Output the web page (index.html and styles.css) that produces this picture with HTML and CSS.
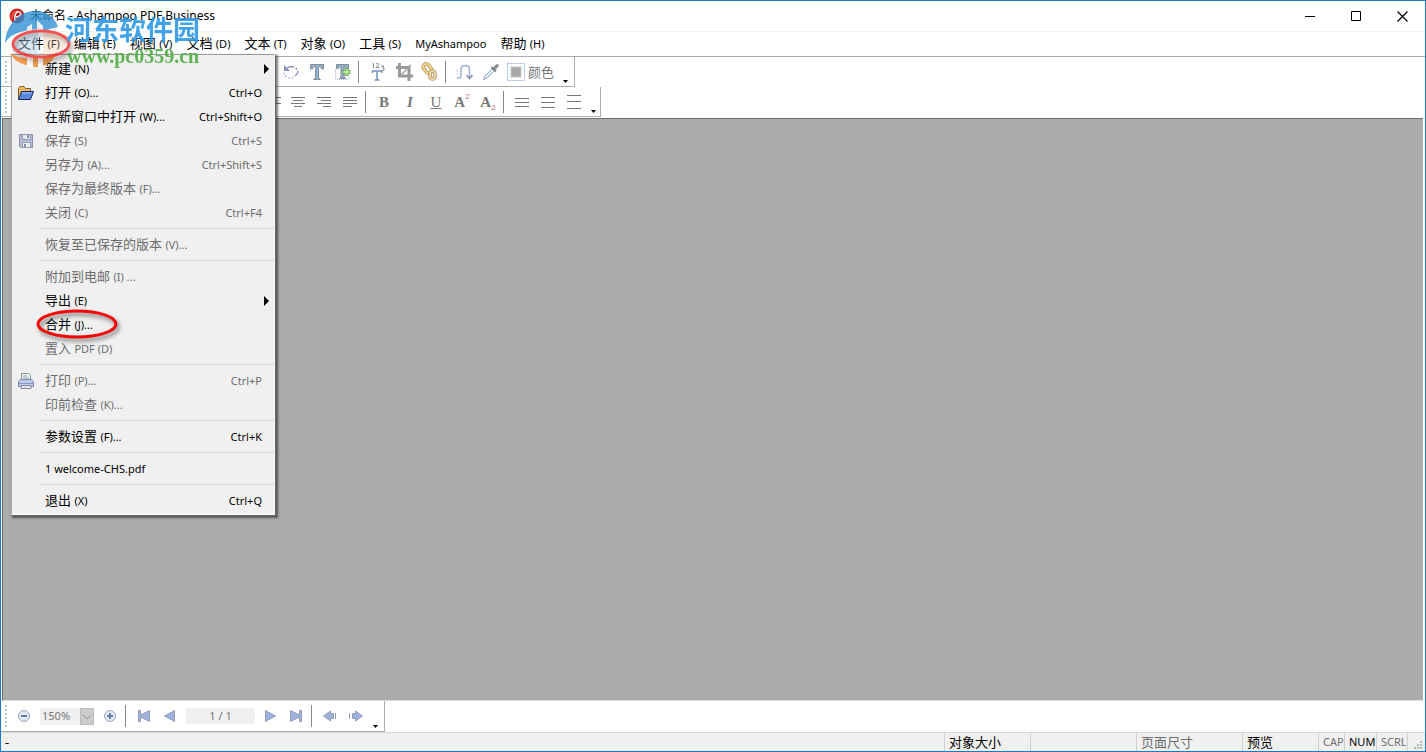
FILE: index.html
```html
<!DOCTYPE html>
<html lang="zh-CN">
<head>
<meta charset="utf-8">
<title>未命名 - Ashampoo PDF Business</title>
<link rel="stylesheet" href="styles.css">
</head>
<body>
<div class="window">
  <header class="titlebar">
    <svg class="app-icon" width="16" height="16" viewBox="0 0 16 16"><circle cx="8" cy="8" r="7.5" fill="#c81414"/><path d="M1 9Q3 2 10 1Q5 4 3 13Z" fill="#ed4b35"/><path d="M6 13Q5 7 8 4Q11 3 12 6Q11 9 7 9" fill="none" stroke="#fff" stroke-width="1.5"/></svg>
    <h1 class="title">未命名 - Ashampoo PDF Business</h1>
    <div class="window-buttons">
      <button aria-label="最小化"><svg width="10" height="11"><path d="M0 5.500H10" stroke="#000"/></svg></button>
      <button aria-label="最大化"><svg width="10" height="11"><path d="M.5 .5H9.500V9.500H.5Z" fill="none" stroke="#000"/></svg></button>
      <button aria-label="关闭"><svg width="11" height="11"><path d="M.5 .5L10.500 10.500M10.500 .5L.5 10.500" stroke="#000" stroke-width="1.200"/></svg></button>
    </div>
  </header>

  <nav class="menubar">
    <button class="entry">文件 <small>(F)</small></button>
    <button class="entry">编辑 <small>(E)</small></button>
    <button class="entry">视图 <small>(V)</small></button>
    <button class="entry">文档 <small>(D)</small></button>
    <button class="entry">文本 <small>(T)</small></button>
    <button class="entry">对象 <small>(O)</small></button>
    <button class="entry">工具 <small>(S)</small></button>
    <button class="entry"><small>MyAshampoo</small></button>
    <button class="entry">帮助 <small>(H)</small></button>

    <div class="menu">
      <button class="item"><span>新建 <small>(N)</small></span><svg class="arrow" width="6" height="10"><path d="M0 0L5 5L0 10Z"/></svg></button>
      <button class="item"><svg class="item-icon" width="16" height="16" viewBox="0 0 16 16"><path d="M.5 14V3.500L2 1.500H6L7.500 3.500H12.500V7" fill="#f0b95c" stroke="#7d5b2a"/><path d="M3.500 6.500H15.500L12.500 14.500H.5Z" fill="#5b86dc" stroke="#122a64"/><path d="M4 8H14" stroke="#a5c4ff"/></svg><span>打开 <small>(O)...</small></span><kbd>Ctrl+O</kbd></button>
      <button class="item"><span>在新窗口中打开 <small>(W)...</small></span><kbd>Ctrl+Shift+O</kbd></button>
      <button class="item" disabled><svg class="item-icon" width="16" height="16" viewBox="0 0 16 16"><path d="M1.500 1.500H14.500V14.500H2.500L1.500 13.500Z" fill="#b5bcd6" stroke="#8b90a4"/><path d="M4.500 1.500H12.500V6.500H4.500Z" fill="#e4e8ec" stroke="#959bb0"/><path d="M4.500 9.500H12.500V14.500H4.500Z" fill="#eef0ef" stroke="#959bb0"/><path d="M6 11H8V14H6ZM9 2H11V5H9Z" fill="#8c93ac"/></svg><span>保存 <small>(S)</small></span><kbd>Ctrl+S</kbd></button>
      <button class="item" disabled><span>另存为 <small>(A)...</small></span><kbd>Ctrl+Shift+S</kbd></button>
      <button class="item" disabled><span>保存为最终版本 <small>(F)...</small></span></button>
      <button class="item" disabled><span>关闭 <small>(C)</small></span><kbd>Ctrl+F4</kbd></button>
      <hr>
      <button class="item" disabled><span>恢复至已保存的版本 <small>(V)...</small></span></button>
      <hr>
      <button class="item" disabled><span>附加到电邮 <small>(I) ...</small></span></button>
      <button class="item"><span>导出 <small>(E)</small></span><svg class="arrow" width="6" height="10"><path d="M0 0L5 5L0 10Z"/></svg></button>
      <button class="item"><span>合并 <small>(J)...</small></span></button>
      <button class="item" disabled><span>置入 <small>PDF (D)</small></span></button>
      <hr>
      <button class="item" disabled><svg class="item-icon" width="16" height="16" viewBox="0 0 16 16"><path d="M3.500 7V.5H10.500L12.500 2.500V7" fill="#eef4f4" stroke="#84949a"/><path d="M5 3H9M5 5H11" stroke="#8fa0a6"/><path d="M.5 8.500L2.500 6.500H13.500L15.500 8.500V13.500H.5Z" fill="#bccbe6" stroke="#7e8ba8"/><path d="M1 10.500H15" stroke="#8799c5"/><path d="M3 12.500H13V15.500H3Z" fill="#e2e8ee" stroke="#818b9b"/></svg><span>打印 <small>(P)...</small></span><kbd>Ctrl+P</kbd></button>
      <button class="item" disabled><span>印前检查 <small>(K)...</small></span></button>
      <hr>
      <button class="item"><span>参数设置 <small>(F)...</small></span><kbd>Ctrl+K</kbd></button>
      <hr>
      <button class="item"><small>1 welcome-CHS.pdf</small></button>
      <hr>
      <button class="item"><span>退出 <small>(X)</small></span><kbd>Ctrl+Q</kbd></button>
      <svg class="merge-ring" width="90" height="38"><ellipse cx="41" cy="15" rx="39" ry="13"/></svg>
    </div>
  </nav>

  <div class="toolbar toolbar-main">
    <button aria-label="旋转"><svg width="18" height="18" viewBox="0 0 18 18"><path d="M4 6Q9 1.500 13.500 5T14 12" fill="none" stroke="#8d94ba" stroke-width="1.500" stroke-dasharray="9 1.500 2 1.500"/><path d="M2 2V8H8Z" fill="#8d94ba"/><path d="M14 12Q10 17 5 14T3 9" fill="none" stroke="#9aa9d4" stroke-width="1.500" stroke-dasharray="1.500 2"/></svg></button>
    <button aria-label="文本工具"><svg width="18" height="18" viewBox="0 0 18 18"><path d="M2.500 1.500H15.500V6H13.500L12.500 3.500H10.500V14.500L12.500 16.500H5.500L7.500 14.500V3.500H5.500L4.500 6H2.500Z" fill="#8fb2d3" stroke="#858d98"/></svg></button>
    <button aria-label="添加文本"><svg width="18" height="18" viewBox="0 0 18 18"><path d="M1.500 6V16.500H15V8" fill="none" stroke="#9fb7e6" stroke-dasharray="1 1"/><path d="M2.500 1.500H14.500V5.500H12L11 3.500H10V14L12 15.500H5.500L7 14V3.500H5.500L4.500 5.500H2.500Z" fill="#8fb2d3" stroke="#858d98"/><path d="M12.500 5V13M8.500 9H16.500" stroke="#78a96a" stroke-width="4"/><path d="M12.500 6V12M9.500 9H15.500" stroke="#b6ee94" stroke-width="2"/></svg></button>
    <i class="divider"></i>
    <button aria-label="页码"><svg width="18" height="20" viewBox="0 0 18 20"><path d="M3.500 2L4.500 1.500V6M7 2Q9 .5 10 2.500L7 5.500H10.500M12 4H15L13.500 6Q16 6 15 8Q14 9.500 12 8" fill="none" stroke="#888"/><path d="M3.500 11V9H12.500V11M8 9V18M5.500 18H10.500" fill="none" stroke="#7592bd" stroke-width="1.500"/></svg></button>
    <button aria-label="裁剪"><svg width="18" height="18" viewBox="0 0 18 18"><path d="M4.500 0V13H18M1 4.500H14V18" fill="none" stroke="#9a9a9a" stroke-width="3"/><path d="M6 12L16 2" stroke="#a2a2a2" stroke-width="1.500"/></svg></button>
    <button aria-label="链接"><svg width="18" height="20" viewBox="0 0 18 20"><rect x="3.500" y="1.500" width="6" height="10" rx="3" transform="rotate(-35 6.500 6.500)" fill="none" stroke="#b09050" stroke-width="3.500"/><rect x="3.500" y="1.500" width="6" height="10" rx="3" transform="rotate(-35 6.500 6.500)" fill="none" stroke="#f0d38b" stroke-width="2"/><rect x="9" y="9" width="5" height="8" rx="2.500" fill="none" stroke="#b09265" stroke-width="3.500"/><rect x="9" y="9" width="5" height="8" rx="2.500" fill="none" stroke="#ecd3a0" stroke-width="2"/></svg></button>
    <i class="divider"></i>
    <button aria-label="连接文本"><svg width="18" height="18" viewBox="0 0 18 18"><path d="M1 15H3.500Q5 15 5 13V6Q5 2.500 9.500 2.500Q13.500 2.500 13.500 6V15" fill="none" stroke="#9fb2d6" stroke-width="1.500"/><path d="M10.500 12L13.500 15.500L16.500 12" fill="none" stroke="#8793a9" stroke-width="1.500"/><path d="M1 6V12" stroke="#b5c2e0" stroke-dasharray="1 1"/></svg></button>
    <button aria-label="吸管"><svg width="18" height="18" viewBox="0 0 18 18"><path d="M10.500 5.500L3 13L1.500 16.500L5 15L12.500 7.500Z" fill="#e5f2ff" stroke="#8fa3cb"/><path d="M9.500 4L14 8.500M11 7L15 3" stroke="#777" stroke-width="2"/><path d="M12 3L15 1Q18 1 16 4L14 6Z" fill="#8f9092"/></svg></button>
    <button class="color"><svg width="18" height="18" viewBox="0 0 18 18"><rect x=".5" y=".5" width="17" height="17" fill="#fff" stroke="#9eb6ed" stroke-dasharray="2 1"/><rect x="4" y="4" width="10" height="10" fill="#aaa" stroke="#c7c7c7"/></svg>颜色</button>
    <button class="more" aria-label="更多"><svg width="5" height="3"><path d="M0 0H5L2.500 3Z"/></svg></button>
  </div>

  <div class="toolbar toolbar-format">
    <button class="cut" aria-label="左对齐"><svg width="16" height="12"><path d="M0 1.500H14M0 4.500H10M0 7.500H14M0 10.500H8"/></svg></button>
    <button aria-label="居中"><svg width="16" height="12"><path d="M1 1.500H15M3 4.500H13M1 7.500H15M4 10.500H12"/></svg></button>
    <button aria-label="右对齐"><svg width="16" height="12"><path d="M1 1.500H15M5 4.500H15M1 7.500H15M7 10.500H15"/></svg></button>
    <button aria-label="两端对齐"><svg width="16" height="12"><path d="M1 1.500H15M1 4.500H15M1 7.500H15M1 10.500H10"/></svg></button>
    <i class="divider"></i>
    <button class="glyph"><b>B</b></button>
    <button class="glyph"><b><em>I</em></b></button>
    <button class="glyph light"><u>U</u></button>
    <button class="glyph">A<sup>2</sup></button>
    <button class="glyph">A<sub>2</sub></button>
    <i class="divider"></i>
    <button aria-label="单倍行距"><svg width="16" height="14"><path d="M1 3.500H15M1 7.500H15M1 11.500H15"/></svg></button>
    <button aria-label="1.5 倍行距"><svg width="16" height="14"><path d="M1 2.500H15M1 7.500H15M1 12.500H15"/></svg></button>
    <button aria-label="双倍行距"><svg width="16" height="14"><path d="M1 .5H15M1 6.500H15M1 13.500H15"/></svg></button>
    <button class="more" aria-label="更多"><svg width="5" height="3"><path d="M0 0H5L2.500 3Z"/></svg></button>
  </div>

  <main class="canvas"></main>

  <div class="toolbar toolbar-nav">
    <button aria-label="缩小"><svg width="14" height="14" viewBox="0 0 14 14"><circle cx="7" cy="7" r="5.500" fill="#e1eafb" stroke="#9ba6be"/><path d="M4 7H10" stroke="#6d7fa9" stroke-width="2"/></svg></button>
    <div class="zoom"><select aria-label="缩放"><option>150%</option></select><svg width="14" height="17"><path d="M.5 .5H13.500V16.500H.5Z" fill="#ccc" stroke="#bbb"/><path d="M3 7L7 11L11 7" fill="none" stroke="#999"/></svg></div>
    <button aria-label="放大"><svg width="14" height="14" viewBox="0 0 14 14"><circle cx="7" cy="7" r="5.500" fill="#e1eafb" stroke="#9ba6be"/><path d="M4 7H10M7 4V10" stroke="#6d7fa9" stroke-width="2"/></svg></button>
    <i class="divider"></i>
    <button class="spaced" aria-label="首页"><svg class="nav-icon" width="14" height="12"><path d="M1.500 .5H3.500V5L12.500 .5V11.500L3.500 7V11.500H1.500Z"/></svg></button>
    <button aria-label="上一页"><svg class="nav-icon" width="14" height="12"><path d="M1.500 6L11.500 .5V11.500Z"/></svg></button>
    <input class="page" aria-label="页码" value="1 / 1">
    <button aria-label="下一页"><svg class="nav-icon" width="14" height="12"><path d="M12.500 6L2.500 .5V11.500Z"/></svg></button>
    <button aria-label="末页"><svg class="nav-icon" width="14" height="12"><path d="M12.500 .5H10.500V5L1.500 .5V11.500L10.500 7V11.500H12.500Z"/></svg></button>
    <i class="divider"></i>
    <button class="spaced" aria-label="后退"><svg class="nav-icon" width="16" height="12"><path d="M1.500 6L8.500 1V3.500H11.500V8.500H8.500V11Z"/><path d="M13.500 3V9"/></svg></button>
    <button aria-label="前进"><svg class="nav-icon" width="16" height="12"><path d="M14.500 6L7.500 1V3.500H4.500V8.500H7.500V11Z"/><path d="M1.500 3V9"/></svg></button>
    <button class="more" aria-label="更多"><svg width="5" height="3"><path d="M0 0H5L2.500 3Z"/></svg></button>
  </div>

  <footer class="status">
    <span class="message">-</span>
    <span class="cell size">对象大小</span>
    <span class="cell wide"></span>
    <span class="cell wide off">页面尺寸</span>
    <span class="cell preview">预览</span>
    <span class="cell key off">CAP</span>
    <span class="cell key num">NUM</span>
    <span class="cell key scroll off">SCRL</span>
    <span class="cell corner"><svg width="9" height="9"><path d="M6 0H8V2H6ZM3 3H5V5H3ZM6 3H8V5H6ZM0 6H2V8H0ZM3 6H5V8H3ZM6 6H8V8H6Z" fill="#b8b8b8"/></svg></span>
  </footer>

  <div class="watermark">
    <svg class="watermark-logo" width="76" height="64" viewBox="0 0 76 64">
      <defs><filter id="soft" x="-20%" y="-30%" width="150%" height="180%"><feDropShadow dx="2" dy="3" stdDeviation="2" flood-color="#000" flood-opacity=".5"/></filter></defs>
      <path d="M5 33C6 14 20 1 35 1C46 1 55 7 58 17L46 20Q36 18 24 21Q10 24 5 33Z" fill="#2d8fd4" opacity=".88"/>
      <path d="M10 43Q18 48 27 48V55C19 54 13 49 10 43ZM33 48H38V57H33ZM43 48Q52 47 57 42C54 50 49 54 43 56Z" fill="#f38b2d" opacity=".9"/>
      <path d="M13 33Q16 22 38 21V45Q15 45 13 33Z" fill="#a9cfe8" opacity=".5"/>
      <path d="M43 21Q66 23 67 33Q64 43 43 45Z" fill="#f3bd98" opacity=".35"/>
      <path d="M37 10L43 16V21H37ZM27 46H33V57H27ZM38 46H43V57H38ZM27 17L32 14V21H27Z" fill="#fff" opacity=".85"/>
      <ellipse cx="41" cy="34" rx="28" ry="13" fill="none" stroke="#ef2424" stroke-width="3" opacity=".85" filter="url(#soft)"/>
    </svg>
    <div class="watermark-text"><strong>河东软件园</strong><span>www.pc0359.cn</span></div>
  </div>
</div>
</body>
</html>
```
FILE: styles.css
```css
* { box-sizing: border-box; }
body { margin: 0; }
button, input, select { font: inherit; color: inherit; border: 0; background: none; padding: 0; margin: 0; border-radius: 0; }
.window {
  position: relative;
  display: flex;
  flex-direction: column;
  height: 100vh;
  overflow: hidden;
  border: 1px solid #1979ca;
  background: #fff;
  color: #000;
  font: 13px/16px "Noto Sans", "Noto Sans CJK SC", sans-serif;
}
small, kbd { font: 11px/16px "Noto Sans", "Noto Sans CJK SC", sans-serif; }
svg { display: block; flex: none; }

.titlebar { display: flex; align-items: center; height: 30px; padding-left: 8px; flex: none; }
.title { margin: 0 0 0 5px; font-size: 12px; font-weight: 400; }
.window-buttons { display: flex; margin-left: auto; }
.window-buttons button { display: flex; justify-content: center; align-items: center; width: 46px; height: 30px; }

.menubar {
  position: relative;
  display: flex;
  align-items: center;
  gap: 14px;
  height: 26px;
  flex: none;
  padding-left: 17px;
  border-top: 1px solid #f3f3f3;
  border-bottom: 1px solid #adadad;
  white-space: nowrap;
}
.entry { padding-bottom: 2px; }
.menu {
  position: absolute;
  z-index: 2;
  left: 10px;
  top: 22px;
  width: 264px;
  padding: 2px 0 1px;
  border: 1px solid #f8f8f8;
  border-top-color: #999;
  border-left-color: #aaa;
  background: #f0f0f0;
  box-shadow: 1px 1px 0 #666, 2px 2px 2px 1px rgba(0, 0, 0, .5);
}
.item {
  position: relative;
  display: flex;
  align-items: center;
  justify-content: space-between;
  width: 100%;
  height: 24px;
  padding: 0 12px 0 33px;
  text-align: left;
}
.item > span { padding-bottom: 2px; }
.item:disabled, .off { color: #6d6d6d; }
.item-icon { position: absolute; left: 6px; top: 4px; }
.arrow { margin-right: -8px; }
.menu hr { height: 1px; margin: 3px 0 4px 27px; border: 0; background: #d4d4d4; }
.merge-ring { position: absolute; left: 24px; top: 254px; filter: drop-shadow(2px 3px 2px rgba(0, 0, 0, .5)); pointer-events: none; }
.merge-ring ellipse { fill: none; stroke: #f50505; stroke-width: 3; }

.toolbar {
  position: relative;
  display: flex;
  align-items: center;
  align-self: flex-start;
  flex: none;
  height: 30px;
  border-right: 1px solid #adadad;
  border-bottom: 1px solid #adadad;
  color: #777;
}
.toolbar::before { content: ""; position: absolute; left: 4px; top: 4px; bottom: 3px; width: 2px; background: repeating-linear-gradient(#c4c4c4 0 2px, #fff 2px 4px); }
.toolbar button { display: flex; align-items: center; justify-content: center; width: 26px; height: 26px; }
.divider { width: 1px; height: 22px; margin: 0 3px; background: #888; }
.toolbar .more { align-self: flex-end; width: 17px; height: 10px; }
.toolbar-main { padding-left: 277px; }
.toolbar-main .divider { margin: 0 6px 0 2px; }
.toolbar .color { width: 53px; gap: 3px; }
.toolbar-format { padding-left: 264px; }
.toolbar-format svg { stroke: #777; }
.toolbar-format .cut { width: 20px; }
.toolbar-format .divider { margin: 0 5px 0 2px; }
.toolbar .more svg { fill: #000; stroke: none; }
.toolbar-format .more { width: 12px; margin-right: 1px; }
.toolbar .glyph { font: bold 15px/20px "Liberation Serif", serif; }
.toolbar .light { font-weight: 400; }
.glyph sup, .glyph sub { color: #bd6f6f; font: 8px/8px "Liberation Sans", sans-serif; }
.glyph sup { align-self: flex-start; margin-top: 4px; }
.glyph sub { align-self: flex-end; margin-bottom: 3px; }

.canvas { flex: 1; margin: 1px 2px 0 1px; border-top: 1px solid #6d6d6d; border-left: 1px solid #6d6d6d; border-bottom: 1px solid #ddd; background: #ababab; }

.toolbar-nav { height: 31px; padding-left: 10px; font: 11px/16px "Noto Sans", sans-serif; }
.zoom { position: relative; width: 54px; margin: 0 3px; background: #f0f0f0; }
.zoom select { display: block; width: 54px; height: 17px; padding-left: 2px; appearance: none; }
.zoom svg { position: absolute; right: 0; top: 0; pointer-events: none; }
.toolbar-nav .divider { margin: 0 2px; }
.toolbar-nav .spaced { margin-left: 3px; }
.toolbar-nav .more { width: 13px; margin-right: 2px; }
.nav-icon { fill: #9fb2dc; stroke: #919dbb; }
.page { width: 69px; height: 16px; margin: 0 2px 0 3px; background: #f0f0f0; text-align: center; }

.status { display: flex; height: 19px; flex: none; border-top: 1px solid #d5d5d5; background: #f0f0f0; white-space: nowrap; line-height: 18px; }
.message { flex: 1; padding-left: 4px; }
.cell { padding-left: 4px; border-left: 1px solid #d0d0d0; flex: none; }
.size { width: 86px; }
.wide { width: 106px; }
.preview { width: 76px; }
.key { width: 26px; font-size: 11px; }
.num { width: 32px; }
.scroll { width: 31px; }
.corner { display: flex; align-items: flex-end; width: 18px; padding: 0 0 1px 6px; }

.watermark { position: absolute; z-index: 3; left: -1px; top: 9px; display: flex; pointer-events: none; opacity: .9; }
.watermark-text { display: flex; flex-direction: column; margin: 6px 0 0 -11px; }
.watermark-text strong { color: #2e9ae9; font: bold 27px/26px "Noto Sans CJK SC", sans-serif; }
.watermark-text span { margin: 2px 0 0 2px; color: #4fae45; font: bold 20px/24px "Liberation Serif", serif; }
```
